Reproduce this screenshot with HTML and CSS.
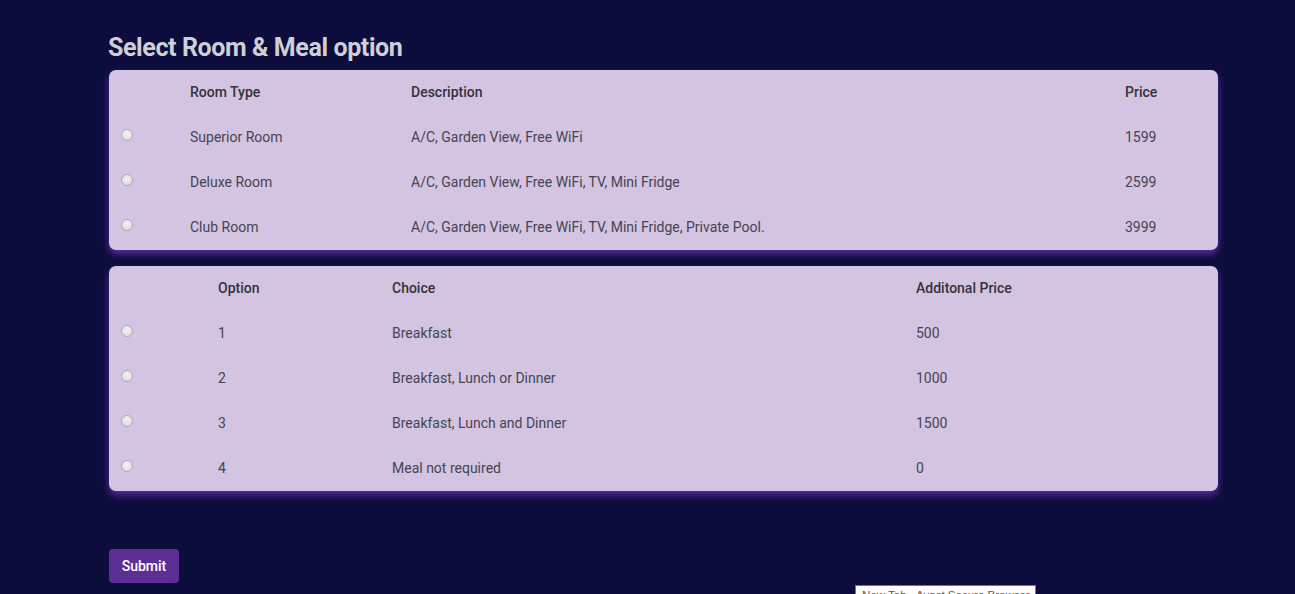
FILE: index.html
```html
<!DOCTYPE html>
<html>
<head>
<meta charset="utf-8">
<link rel="stylesheet" href="styles.css">
</head>
<body>
<div class="page">
  <h1 class="title">Select Room &amp; Meal option</h1>
  <div class="card">
    <div class="grid rooms head">
      <div></div><div>Room Type</div><div>Description</div><div>Price</div>
    </div>
    <div class="grid rooms">
      <div class="rcell"><input type="radio" name="room" class="radio"></div><div>Superior Room</div><div>A/C, Garden View, Free WiFi</div><div>1599</div>
    </div>
    <div class="grid rooms">
      <div class="rcell"><input type="radio" name="room" class="radio"></div><div>Deluxe Room</div><div>A/C, Garden View, Free WiFi, TV, Mini Fridge</div><div>2599</div>
    </div>
    <div class="grid rooms">
      <div class="rcell"><input type="radio" name="room" class="radio"></div><div>Club Room</div><div>A/C, Garden View, Free WiFi, TV, Mini Fridge, Private Pool.</div><div>3999</div>
    </div>
  </div>
  <div class="card">
    <div class="grid meals head">
      <div></div><div>Option</div><div>Choice</div><div>Additonal Price</div>
    </div>
    <div class="grid meals">
      <div class="rcell"><input type="radio" name="meal" class="radio"></div><div>1</div><div>Breakfast</div><div>500</div>
    </div>
    <div class="grid meals">
      <div class="rcell"><input type="radio" name="meal" class="radio"></div><div>2</div><div>Breakfast, Lunch or Dinner</div><div>1000</div>
    </div>
    <div class="grid meals">
      <div class="rcell"><input type="radio" name="meal" class="radio"></div><div>3</div><div>Breakfast, Lunch and Dinner</div><div>1500</div>
    </div>
    <div class="grid meals">
      <div class="rcell"><input type="radio" name="meal" class="radio"></div><div>4</div><div>Meal not required</div><div>0</div>
    </div>
  </div>
  <button class="submit">Submit</button>
</div>
<div class="tooltip">New Tab - Avast Secure Browser</div>
</body>
</html>
```
FILE: styles.css
```css
html, body {
  margin: 0;
  padding: 0;
  background: #0d0d3d;
  height: 594px;
  overflow: hidden;
  font-family: Roboto, "Liberation Sans", sans-serif;
}
.page {
  padding: 34px 0 0 109px;
  width: 1109px;
}
.title {
  margin: 0 0 8px -1px;
  font-size: 25px;
  line-height: 28px;
  font-weight: 700;
  color: #cfcfd6;
  letter-spacing: -0.4px;
}
.card {
  background: #d3c4e2;
  border-radius: 7px;
  box-shadow: 0 4px 7px rgba(95, 50, 170, 0.9);
  margin-bottom: 16px;
}
.grid {
  display: grid;
  height: 45px;
  align-items: center;
  font-size: 14px;
  color: #454550;
  padding-bottom: 2px;
  box-sizing: border-box;
}
.rooms {
  grid-template-columns: 81px 221px 714px 93px;
}
.meals {
  grid-template-columns: 109px 174px 524px 302px;
}
.head {
  font-weight: 500;
  color: #333338;
}
.rcell {
  padding-left: 12px;
  display: flex;
  align-items: center;
  height: 100%;
  padding-bottom: 3px;
  box-sizing: border-box;
}
.radio {
  appearance: none;
  -webkit-appearance: none;
  margin: 0;
  width: 12px;
  height: 12px;
  border-radius: 50%;
  border: 1px solid #b0aab8;
  background: radial-gradient(circle at 50% 35%, #f2f2f2, #d8d8d8);
}
.submit {
  margin-top: 42px;
  background: #5b2f94;
  color: #ffffff;
  border: none;
  border-radius: 4px;
  width: 70px;
  height: 34px;
  font-family: Roboto, "Liberation Sans", sans-serif;
  font-size: 14px;
  font-weight: 500;
  padding: 0;
}
.tooltip {
  position: absolute;
  left: 855px;
  top: 585px;
  width: 181px;
  height: 20px;
  background: #ffffff;
  border: 1px solid #767676;
  font-family: "Liberation Sans", Arial, sans-serif;
  font-size: 11.5px;
  line-height: 18px;
  padding-left: 6px;
  color: #575757;
  box-sizing: border-box;
  white-space: nowrap;
  overflow: hidden;
}
```
